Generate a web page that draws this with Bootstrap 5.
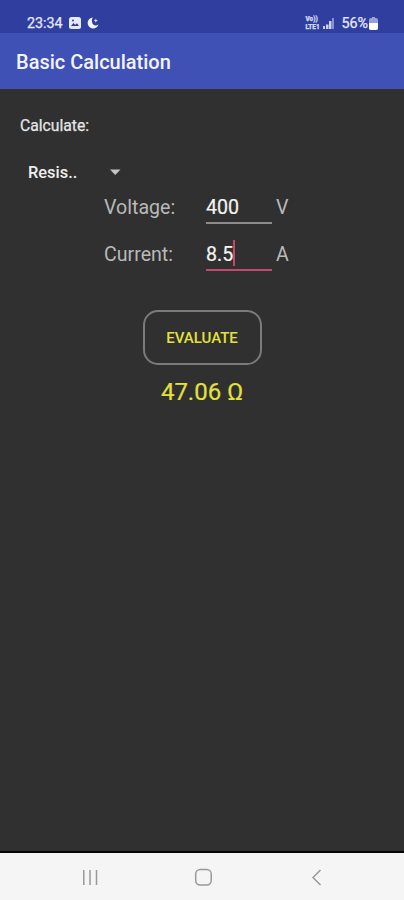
<!DOCTYPE html>
<html lang="en">
<head>
<meta charset="utf-8">
<meta name="viewport" content="width=device-width, initial-scale=1">
<title>Basic Calculation</title>
<link href="https://cdn.jsdelivr.net/npm/bootstrap@5.3.0/dist/css/bootstrap.min.css" rel="stylesheet">
<style>
body{background:#303030;font-family:Roboto,"Liberation Sans",sans-serif;color:#e6e6e6;height:900px;overflow:hidden}
svg{display:block;flex:none}
.status-bar{height:33px;background:#303f9f;padding:13px 26px 0 27px;color:#e6e9fa;font-size:14.3px;line-height:20px;-webkit-text-stroke:.25px}
.status-bar .clock{width:42px}
.status-bar svg{margin-top:4px}
.icon-moon{margin-left:6px}
.volte{width:16px;font-size:6.4px;line-height:7.500px;font-weight:900;color:#d3d8f4;margin-top:3px;white-space:nowrap}
.icon-signal{margin:0 6px 0 2px}
.icon-battery{margin-left:1px}
.app-bar{height:55.5px;background:#3f51b5;padding:0 16px}
.app-title{font-size:20px;line-height:24px;font-weight:500;color:#f3f4fd;padding-top:2px}
.caption{font-size:15.7px;line-height:20px;margin:27px 0 0 20px;-webkit-text-stroke:.25px}
.spinner-select{width:96px;height:24px;margin:25px 0 0 28px;font-size:16.4px;line-height:24px;font-weight:500;color:#eee}
.reading{height:47px;margin-left:104px;font-size:19.600px;line-height:24px;color:#b9b9b9}
.reading .name{width:102px}
.reading .name,.reading .unit{padding-top:3px}
.reading .entry{width:66px;height:31px;color:#f4f4f4;border-bottom:2px solid #8c8c8c;margin-right:4px;padding-top:3px;-webkit-text-stroke:.2px}
.reading .entry.active{border-color:#c2486f}
.caret{width:2px;height:26px;background:#c2486f;margin-top:-3px}
.evaluation{margin-top:23px}
.btn-evaluate{width:119px;height:55px;border:2px solid #7b7b7b;border-radius:15px;color:#e4e13c;font-size:15px;font-weight:500;padding:3px 0 0}
.btn-evaluate:hover{border-color:#9a9a9a;color:#e4e13c}
.result{color:#e4e13c;font-size:24px;line-height:30px;margin-top:12px;-webkit-text-stroke:.2px}
.system-nav{height:49px;background:#f5f5f5;border-top:2px solid #050505;color:#999}
</style>
</head>
<body class="d-flex flex-column">
<div class="status-bar d-flex align-items-start flex-shrink-0">
  <span class="clock">23:34</span>
  <svg width="12" height="12" viewBox="0 0 12 12"><rect width="12" height="12" rx="2.5" fill="#e6e9fa"/><path d="M2 9l2.400-3 1.800 1.800L8 6.200 10 9z" fill="#303f9f"/><circle cx="4" cy="3.600" r="1" fill="#303f9f"/></svg>
  <svg class="icon-moon" width="12" height="12" viewBox="0 0 12 12"><path d="M6 .5A5.500 5.500 0 1 0 11.500 7.200 3.700 3.700 0 0 1 5 4.800C4.700 3 5 1.500 6 .5z" fill="#f2f4ff"/><path d="M8.800 1.500l.6 1.500 1.600.6-1.600.6-.6 1.600-.6-1.600-1.500-.6 1.500-.6z" fill="#e6e9fa"/></svg>
  <div class="d-flex ms-auto">
    <div class="volte"><div>Vo))</div><div>LTE1</div></div>
    <svg class="icon-signal" width="12" height="12" viewBox="0 0 12 12"><path d="M0 9h2v3H0zM3 7.500h2.500V12H3zM6 4h2.500v8H6z" fill="#cbd1f1"/><path d="M9 1h2v11H9z" fill="#8490cf"/></svg>
    <span>56%</span>
    <svg class="icon-battery" width="9" height="13" viewBox="0 0 9 13"><path d="M3 0h3v1.500H3z" fill="#98a1d6"/><rect y="1" width="9" height="12" rx="2" fill="#98a1d6"/><path d="M0 6h9v5a2 2 0 0 1-2 2H2a2 2 0 0 1-2-2z" fill="#fff"/></svg>
  </div>
</div>
<header class="app-bar d-flex align-items-center flex-shrink-0"><h1 class="app-title mb-0">Basic Calculation</h1></header>
<main class="flex-grow-1">
  <div class="caption">Calculate:</div>
  <div class="spinner-select d-flex align-items-center justify-content-between" role="combobox" aria-label="Quantity">
    <span>Resis..</span>
    <svg width="18" height="10" viewBox="0 0 18 10"><path d="M4 1.500h10.500L9.250 7z" fill="#c4c4c4"/></svg>
  </div>
  <div class="reading d-flex mt-2">
    <span class="name">Voltage:</span><div class="entry">400</div><span class="unit">V</span>
  </div>
  <div class="reading d-flex">
    <span class="name">Current:</span><div class="entry active d-flex"><span>8.5</span><i class="caret"></i></div><span class="unit">A</span>
  </div>
  <div class="evaluation d-flex flex-column align-items-center">
    <button type="button" class="btn btn-evaluate">EVALUATE</button>
    <div class="result">47.06 Ω</div>
  </div>
</main>
<nav class="system-nav d-flex align-items-center flex-shrink-0" aria-label="System">
  <svg width="404" height="47" viewBox="0 0 404 47" fill="none" stroke="currentColor" stroke-width="1.5"><path d="M83.800 17v15M90 17v15M96.500 17v15"/><rect x="195.700" y="16.500" width="15.500" height="15.500" rx="4.500"/><path d="M320.500 17l-7.500 7.500 7.500 7.500"/></svg>
</nav>
<script src="https://cdn.jsdelivr.net/npm/bootstrap@5.3.0/dist/js/bootstrap.bundle.min.js"></script>
</body>
</html>
